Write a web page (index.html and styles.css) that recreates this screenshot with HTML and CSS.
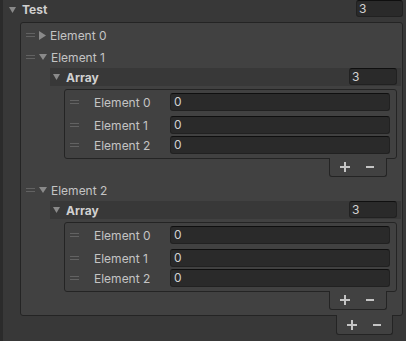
FILE: index.html
```html
<!DOCTYPE html>
<html lang="en">
<head>
    <meta charset="UTF-8">
    <title>Inspector - Test</title>
    <link rel="stylesheet" href="styles.css">
</head>
<body>
<div class="inspector">
    <div class="head">
        <svg class="arrow down" width="7" height="6" viewBox="0 0 7 6"><polygon points="0,0 7,0 3.5,6"/></svg>
        <span class="title">Test</span>
        <div class="field size">3</div>
    </div>

    <div class="list outer">
        <div class="item">
            <span class="handle"></span>
            <svg class="arrow" width="7" height="9" viewBox="0 0 7 9"><polygon points="0,0 7,4.5 0,9"/></svg>
            <span class="name">Element 0</span>
        </div>

        <div class="item">
            <span class="handle"></span>
            <svg class="arrow" width="8" height="6" viewBox="0 0 8 6"><polygon points="0,0 8,0 4,6"/></svg>
            <span class="name">Element 1</span>
        </div>
        <div class="array-head">
            <svg class="arrow" width="7" height="6" viewBox="0 0 7 6"><polygon points="0,0 7,0 3.5,6"/></svg>
            <span class="title">Array</span>
            <div class="field size">3</div>
        </div>
        <div class="list inner">
            <div class="entry first"><span class="handle"></span><span class="label">Element 0</span><div class="field">0</div></div>
            <div class="entry second"><span class="handle"></span><span class="label">Element 1</span><div class="field">0</div></div>
            <div class="entry"><span class="handle"></span><span class="label">Element 2</span><div class="field">0</div></div>
        </div>
        <div class="footer">
            <svg width="10" height="10" viewBox="0 0 10 10"><rect x="4" y="0" width="2" height="10"/><rect x="0" y="4" width="10" height="2"/></svg>
            <svg width="8" height="10" viewBox="0 0 8 10"><rect x="0" y="4" width="8" height="2"/></svg>
        </div>

        <div class="item spaced">
            <span class="handle"></span>
            <svg class="arrow" width="8" height="6" viewBox="0 0 8 6"><polygon points="0,0 8,0 4,6"/></svg>
            <span class="name">Element 2</span>
        </div>
        <div class="array-head">
            <svg class="arrow" width="7" height="6" viewBox="0 0 7 6"><polygon points="0,0 7,0 3.5,6"/></svg>
            <span class="title">Array</span>
            <div class="field size">3</div>
        </div>
        <div class="list inner">
            <div class="entry first"><span class="handle"></span><span class="label">Element 0</span><div class="field">0</div></div>
            <div class="entry second"><span class="handle"></span><span class="label">Element 1</span><div class="field">0</div></div>
            <div class="entry"><span class="handle"></span><span class="label">Element 2</span><div class="field">0</div></div>
        </div>
        <div class="footer">
            <svg width="10" height="10" viewBox="0 0 10 10"><rect x="4" y="0" width="2" height="10"/><rect x="0" y="4" width="10" height="2"/></svg>
            <svg width="8" height="10" viewBox="0 0 8 10"><rect x="0" y="4" width="8" height="2"/></svg>
        </div>
    </div>

    <div class="footer outer-foot">
        <svg width="10" height="10" viewBox="0 0 10 10"><rect x="4" y="0" width="2" height="10"/><rect x="0" y="4" width="10" height="2"/></svg>
        <svg width="8" height="10" viewBox="0 0 8 10"><rect x="0" y="4" width="8" height="2"/></svg>
    </div>
</div>
</body>
</html>
```

FILE: styles.css
```css
* {
    box-sizing: border-box;
}
body {
    margin: 0;
    background: #383838;
    font-family: Inter, "Noto Sans", sans-serif;
    font-size: 12px;
    color: #c4c4c4;
}
.inspector {
    height: 341px;
    border-left: 3px solid #2b2b2b;
    padding-right: 3px;
    display: flex;
    flex-direction: column;
}
.head {
    height: 19px;
    display: flex;
    align-items: center;
    padding-left: 6px;
}
.arrow {
    fill: #8a8a8a;
    flex-shrink: 0;
}
.title {
    font-weight: bold;
    color: #d0d0d0;
    margin-left: 6px;
}
.field {
    height: 18px;
    line-height: 16px;
    background: #2a2a2a;
    border: 1px solid #212121;
    border-top-color: #0f0f0f;
    border-radius: 3px;
    padding-left: 3px;
    color: #d2d2d2;
}
.field.size {
    width: 47px;
    height: 17px;
    line-height: 15px;
    margin-left: auto;
    align-self: flex-start;
    padding-left: 2px;
}

/* reorderable lists */
.list {
    display: flex;
    flex-direction: column;
    background: #414141;
    border: 1px solid #242424;
    border-radius: 3px;
}
.list.outer {
    margin: 3px 0 0 17px;
    padding: 3px 0 5px;
}
.item {
    height: 18px;
    display: flex;
    align-items: center;
    padding-left: 5px;
    margin-top: 4px;
}
.item:first-child {
    margin-top: 0;
}
.item .arrow {
    margin-left: 4px;
}
.name {
    margin-left: 4px;
}
.handle {
    width: 9px;
    height: 4px;
    border-top: 1px solid #626262;
    border-bottom: 1px solid #626262;
    flex-shrink: 0;
}
.array-head {
    height: 18px;
    display: flex;
    align-items: center;
    margin: 2px 1px 0 29px;
    padding-left: 3px;
    background: #383838;
}
.array-head .field.size {
    width: 48px;
    margin-right: 4px;
}
.list.inner {
    margin: 3px 5px 0 43px;
    padding: 3px 0 4px;
}
.entry {
    height: 18px;
    display: flex;
    align-items: center;
    padding-left: 5px;
    margin-top: 2px;
}
.entry.first {
    margin-top: 0;
}
.entry.second {
    margin-top: 5px;
}
.label {
    width: 76px;
    margin-left: 15px;
    flex-shrink: 0;
}
.entry .field {
    flex: 1;
    margin-right: 6px;
}
.footer {
    align-self: flex-end;
    width: 58px;
    height: 19px;
    margin: -1px 15px 0 0;
    background: #414141;
    border: 1px solid #242424;
    border-top: none;
    border-radius: 0 0 3px 3px;
    display: flex;
    align-items: center;
    padding-left: 10px;
    gap: 16px;
    fill: #c4c4c4;
}
.item.spaced {
    margin-top: 4px;
}
.footer.outer-foot {
    width: 57px;
    height: 20px;
    margin-right: 10px;
}
```
